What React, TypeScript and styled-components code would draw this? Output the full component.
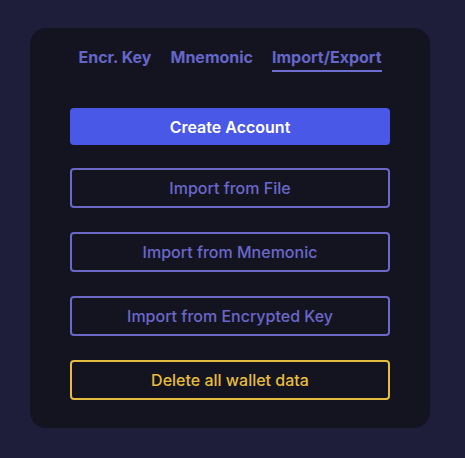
import styled, { createGlobalStyle } from "styled-components"

const GlobalStyle = createGlobalStyle`
  html, body {
    margin: 0;
    padding: 0;
    background: #1e1e3a;
    font-family: Inter, "Noto Sans", sans-serif;
  }
`

const Page = styled.div`
  width: 465px;
  height: 458px;
  padding: 28px 0 0 30px;
  box-sizing: border-box;
`

const Card = styled.div`
  width: 400px;
  height: 400px;
  box-sizing: border-box;
  background: #141420;
  border-radius: 16px;
  padding: 19px 40px 0;
  display: flex;
  flex-direction: column;
`

const Tabs = styled.div`
  display: flex;
  justify-content: center;
  gap: 19px;
  margin-bottom: 36px;
`

const Tab = styled.button<{ $active?: boolean }>`
  background: none;
  border: none;
  padding: 0 0 3px;
  font-family: inherit;
  font-size: 16px;
  font-weight: 700;
  line-height: 20px;
  color: #6466c9;
  border-bottom: 2px solid ${(p) => (p.$active ? "#6e6ed0" : "transparent")};
  cursor: pointer;
`

const Actions = styled.div`
  display: flex;
  flex-direction: column;
  gap: 24px;
`

const Button = styled.button<{ $variant?: "primary" | "outline" | "danger" }>`
  width: 320px;
  height: ${(p) => (p.$variant === "primary" ? "37px" : "40px")};
  box-sizing: border-box;
  border-radius: 4px;
  font-family: inherit;
  font-size: 16px;
  font-weight: ${(p) => (p.$variant === "primary" ? 600 : 500)};
  cursor: pointer;
  background: ${(p) => (p.$variant === "primary" ? "#4a58e8" : "transparent")};
  color: ${(p) =>
    p.$variant === "primary" ? "#ffffff" : p.$variant === "danger" ? "#e6bd3e" : "#6a68cc"};
  border: ${(p) =>
    p.$variant === "primary"
      ? "none"
      : p.$variant === "danger"
        ? "2px solid #e6bd3e"
        : "2px solid #6c68c8"};
  &:first-child {
    margin-bottom: -1px;
  }
`

export default function App() {
  return (
    <>
      <GlobalStyle />
      <Page>
        <Card>
          <Tabs>
            <Tab>Encr. Key</Tab>
            <Tab>Mnemonic</Tab>
            <Tab $active>Import/Export</Tab>
          </Tabs>
          <Actions>
            <Button $variant='primary'>Create Account</Button>
            <Button $variant='outline'>Import from File</Button>
            <Button $variant='outline'>Import from Mnemonic</Button>
            <Button $variant='outline'>Import from Encrypted Key</Button>
            <Button $variant='danger'>Delete all wallet data</Button>
          </Actions>
        </Card>
      </Page>
    </>
  )
}
